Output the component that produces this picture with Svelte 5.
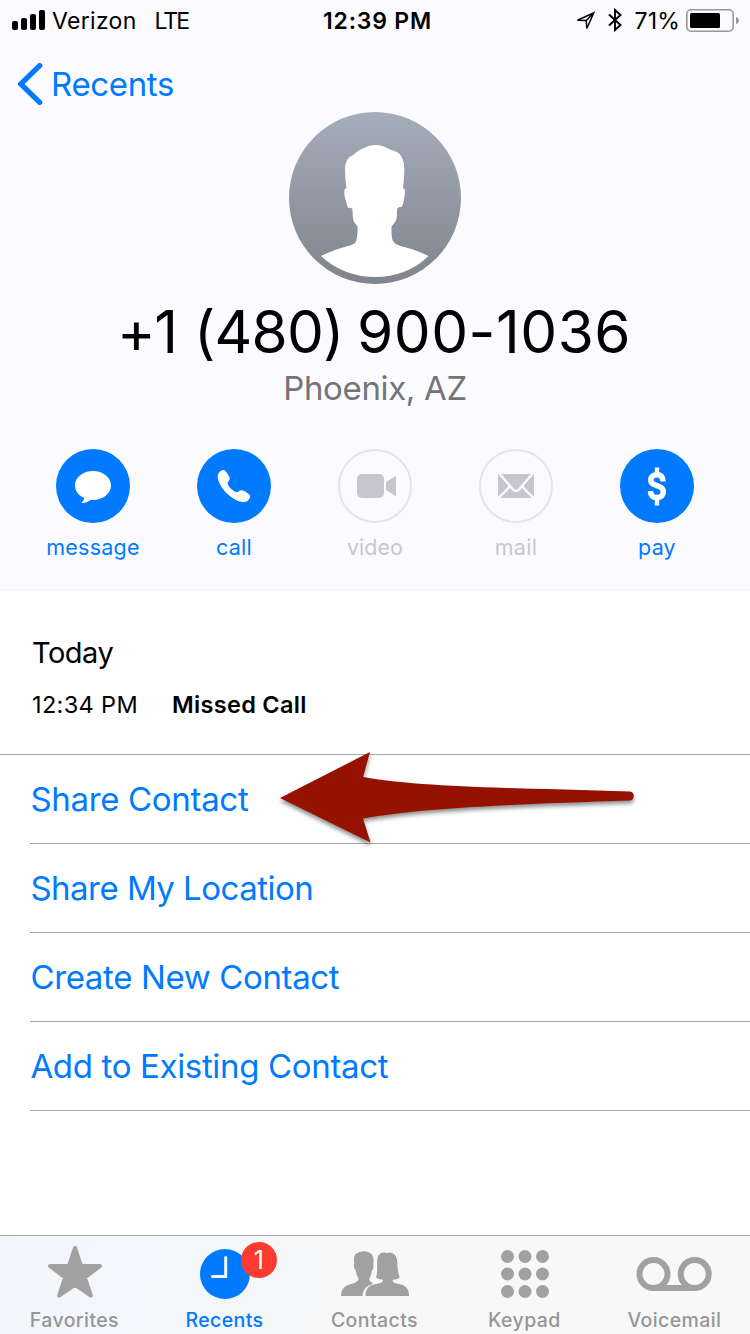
<script>
  const actions = [
    { id: 'message', on: true, ls: 0.25 },
    { id: 'call', on: true, ls: 0.3 },
    { id: 'video', on: false, ls: 0.05 },
    { id: 'mail', on: false, ls: 0.3 },
    { id: 'pay', on: true, ls: 0.2 }
  ];
  const links = [
    { text: 'Share Contact', ls: -0.32 },
    { text: 'Share My Location', ls: -0.52 },
    { text: 'Create New Contact', ls: -0.36 },
    { text: 'Add to Existing Contact', ls: -0.34 }
  ];
  const tabs = ['Favorites', 'Recents', 'Contacts', 'Keypad', 'Voicemail'];
  const dots = [0, 1, 2, 3, 4, 5, 6, 7, 8];
</script>

<main class="phone">
  <section class="header">
    <div class="status">
      <div class="left">
        <svg class="signal" width="34" height="21" viewBox="0 0 34 21">
          <rect x="0" y="11" width="6" height="9" rx="2" />
          <rect x="9" y="8" width="6" height="12" rx="2" />
          <rect x="18" y="4" width="6" height="16" rx="2" />
          <rect x="27" y="0" width="6" height="20" rx="2" />
        </svg>
        <span class="carrier">Verizon</span>
        <span class="network">LTE</span>
      </div>
      <div class="clock">12:39 PM</div>
      <div class="right">
        <svg class="locate" width="20" height="20" viewBox="0 0 20 20">
          <path d="M1.500 9.300 L17.800 1.800 L10.800 17.500 L10.200 9.600 Z M10.200 9.600 L17.800 1.800" fill="none" stroke="#000" stroke-width="1.500" stroke-linejoin="miter" />
        </svg>
        <svg class="bluetooth" width="14" height="24" viewBox="0 0 14 24">
          <path d="M1 6.500 L12.500 17 L7 22 V2 L12.500 7 L1 17.500" fill="none" stroke="#000" stroke-width="1.900" />
        </svg>
        <span class="percent">71%</span>
        <svg class="battery" width="54" height="24" viewBox="0 0 54 24">
          <rect x=".8" y=".8" width="46.400" height="21.400" rx="4.200" fill="none" stroke="#98989c" stroke-width="1.600" />
          <rect x="4" y="4" width="30" height="15" rx="1.500" />
          <path d="M50 8 Q53 9 53 11.500 T50 15 Z" fill="#98989c" />
        </svg>
      </div>
    </div>

    <div class="nav">
      <svg width="26" height="42" viewBox="0 0 26 42">
        <path d="M21.700 2.700 L2.700 21 L21.700 39.300" fill="none" stroke="#007aff" stroke-width="5.300" stroke-linecap="round" stroke-linejoin="miter" />
      </svg>
      <span>Recents</span>
    </div>

    <svg class="avatar" width="172" height="172" viewBox="0 0 172 172">
      <defs>
        <linearGradient id="shade" x1="0" y1="0" x2="0" y2="1">
          <stop offset="0" stop-color="#a5acba" />
          <stop offset="1" stop-color="#80848d" />
        </linearGradient>
      </defs>
      <circle cx="86" cy="86" r="86" fill="url(#shade)" />
      <path fill="#fff" d="M86 33 C92 33 96 35 100 37 C104 39 109 39 112 44 C116 50 115.500 58 115 66 L114 76 C117 77 116 81 115.500 85 C114.500 89 114 95 112 95 C110 95 108.500 95 108 98 C108 103 108 108 106 110 C104 113 102.500 114 102.500 115 C102.500 120 102.500 126 104 129 C106 133 112 134 119 136 C128 139 134 141 139.500 144 C125 158 107 165 86 165 C66 165 47 158 32 144 C38 141 45 138 52 136 C60 133.500 65 133 67 129.500 C68 125 69 120 68.500 114.500 C66 111 64.500 110 64 106 C63.500 101 64 96 62 96 C59 96 58.500 96 57.500 91 C55.500 85 55 81 55.500 78 C55.500 76.500 56.500 76.500 57.500 76.500 C56.500 69 56 62 56 55 C57 49 59 45 63.500 43.500 C67 40 70 38 75 36 C79 34 82 33 86 33 Z" />
    </svg>

    <h1><span class="country">+1</span> <span class="area">(480)</span> <span class="local">900-1036</span></h1>
    <p class="place">Phoenix, AZ</p>

    <div class="actions">
      {#each actions as a}
        <div class="action" class:off={!a.on}>
          <svg width="74" height="74" viewBox="0 0 74 74">
            {#if a.on}
              <circle cx="37" cy="37" r="37" fill="#007aff" />
            {:else}
              <circle cx="37" cy="37" r="36" fill="none" stroke="#e5e4ea" stroke-width="2" />
            {/if}
            {#if a.id === 'message'}
              <path fill="#fff" d="M37 22 C47 22 55 28.300 55 36.500 C55 44.500 47 51 37 51 L34.500 50.900 C32 53 29 54 26.300 54 C25.500 54 25.600 53.600 26.200 53 C27.600 51.600 28.500 50 28.300 49 C22.700 46.500 19 42 19 36.500 C19 28.300 27 22 37 22 Z" />
            {:else if a.id === 'call'}
              <path fill="#fff" d="M21.300 24.700 C22.500 22.500 25.500 20.500 27.500 21.300 C29 22 32 27 32.800 29 C33.200 31.500 30.600 32.300 30.600 34.500 C31.500 38 36 42 39.400 43.300 C41.500 43.500 42.500 40.700 45 41.200 C47.500 41.800 51.500 44.300 52.800 46 C54 48 52 51 50 52.300 C47.500 53.600 43.500 53.200 39 51 C31 47 23.500 38.500 21.600 32 C20.600 29 20.400 26.500 21.300 24.700 Z" />
            {:else if a.id === 'video'}
              <rect x="19" y="25" width="27" height="24" rx="5" fill="#c7c6cc" />
              <path fill="#c7c6cc" d="M58 27 V47.300 L48 41 V33 Z" />
            {:else if a.id === 'mail'}
              <rect x="19" y="25" width="36" height="24" fill="#c7c6cc" />
              <path d="M19.500 23.500 L33.500 40 Q37 43.800 40.500 40 L54.500 23.500 M18 50.500 L31.500 37 M56 50.500 L42.500 37" fill="none" stroke="#fbfaff" stroke-width="2.400" />
            {:else}
              <path d="M43.100 32.500 C42.900 28 40.600 25.700 37 25.700 C33.200 25.700 30.800 27.700 30.800 31 C30.800 38.500 43.300 34.800 43.300 42.800 C43.300 46.300 41 48.600 37 48.600 C32.800 48.600 30.600 46.200 30.500 42" fill="none" stroke="#fff" stroke-width="5.500" />
              <path d="M37 18.500 V25 M37 49 V56.500" stroke="#fff" stroke-width="4.400" />
            {/if}
          </svg>
          <span style="letter-spacing: {a.ls}px">{a.id}</span>
        </div>
      {/each}
    </div>
  </section>

  <section class="log">
    <h2>Today</h2>
    <div class="entry"><span class="when">12:34 PM</span><strong>Missed Call</strong></div>
  </section>

  <section class="links">
    {#each links as l}
      <div class="link"><span style="letter-spacing: {l.ls}px">{l.text}</span></div>
    {/each}
    <svg class="arrow" width="364" height="100" viewBox="0 0 364 100">
      <path d="M5 49 L95 3 L88 28 C150 39 250 39 355 42.500 C360 42.500 360 51.500 355 51.500 C250 55 150 58 88 69.500 L95.500 93.500 Z" fill="#961200" />
    </svg>
  </section>

  <nav class="tabs">
    {#each tabs as t}
      <div class="tab {t.toLowerCase()}">
        <svg width="80" height="64" viewBox="0 0 80 64">
          {#if t === 'Favorites'}
            <path d="M40 12 L46 30 L65 30 L50 41.500 L55.800 59.500 L40 48.500 L24.200 59.500 L30 41.500 L15 30 L34 30 Z" fill="#a1a1a1" stroke="#a1a1a1" stroke-width="4" stroke-linejoin="round" />
          {:else if t === 'Recents'}
            <circle cx="40" cy="38" r="25" fill="#007aff" />
            <path d="M40.700 21.500 V40.500 H27.500" fill="none" stroke="#f4f7fa" stroke-width="3" stroke-linecap="round" />
          {:else if t === 'Contacts'}
            <path fill="#a1a1a1" d="M6 60 C6 53 10 49.500 16 48 C21 46.500 23.500 45.500 23.500 42 C22 40 21.200 37 20.800 34.500 C18.500 32 18.500 29 19.200 27 C18.500 21 19.500 18 22 17.200 C25 14.500 32 14.500 35 17 C38.500 18.500 39 23 38.300 28 C39 31 38 34 36.800 35 C36.500 38 35.500 40.500 34.500 42 C34.500 44 34.500 45.500 36 46.300 C38.500 46.500 38 48 35 49 C30.500 51 28 54 27.500 60 Z" />
            <path fill="#a1a1a1" d="M30.500 60 C30.800 52 34 49.500 40 48.300 C45 47.300 48 46.500 48 43.700 C46 43.700 42.500 43 41 41.500 C43 36 41.500 28 42.500 22 C43.500 17.500 48 15.500 52 17.200 C57 15 62.500 19 62.300 27 C62.300 33 63.500 38 64.800 41.500 C63 43 60 43.700 57.500 43.700 C57.500 46.500 60 47.300 65 48.300 C71 49.500 74 53 74 60 Z" />
          {:else if t === 'Keypad'}
            {#each dots as d}
              <circle cx={22.500 + (d % 3) * 17.500} cy={20.500 + Math.floor(d / 3) * 17.500} r="6.500" fill="#a1a1a1" />
            {/each}
          {:else}
            <g fill="none" stroke="#a1a1a1" stroke-width="6"><circle cx="18.500" cy="38" r="14" /><circle cx="59.700" cy="38" r="14" /><path d="M18.500 52 H59.700" /></g>
          {/if}
        </svg>
        {#if t === 'Recents'}<b class="badge">1</b>{/if}
        <span>{t}</span>
      </div>
    {/each}
  </nav>
</main>

<style>
  :global(body) { margin: 0; background: #fff; }
  .phone { width: 750px; height: 1334px; display: flex; flex-direction: column; overflow: hidden; font-family: Inter, "Liberation Sans", sans-serif; color: #000; background: #fff; }
  svg { display: block; flex: none; }
  h1, h2, p { margin: 0; font-weight: 400; }
  span, h1, h2, strong { white-space: nowrap; }
  .header { box-sizing: border-box; height: 590px; flex: none; background: #fbfaff; border-bottom: 1px solid #f0f0f4; display: flex; flex-direction: column; align-items: center; }
  .status { width: 750px; height: 42px; flex: none; display: grid; grid-template-columns: 1fr auto 1fr; align-items: center; font-size: 23px; line-height: 42px; }
  .left { display: flex; align-items: center; padding-left: 12px; }
  .signal { margin-right: 6px; margin-top: -1px; }
  .carrier { letter-spacing: .3px; margin-right: 18px; }
  .network { letter-spacing: -2px; }
  .clock { font-weight: 600; letter-spacing: .8px; padding-left: 5px; }
  .right { display: flex; align-items: center; justify-content: flex-end; padding-right: 10px; }
  .locate { margin-right: 11.500px; }
  .bluetooth { margin-right: 12.500px; margin-top: -2px; }
  .percent { margin-right: 6px; letter-spacing: .2px; }
  .nav { width: 732px; height: 42px; margin-top: 21px; padding-left: 18px; display: flex; align-items: center; color: #007aff; font-size: 33px; line-height: 42px; flex: none; }
  .nav span { margin-left: 7px; letter-spacing: -.35px; }
  .avatar { margin-top: 7px; }
  h1 { box-sizing: border-box; width: 750px; padding-left: 117px; display: flex; font-size: 58.500px; line-height: 72px; height: 72px; margin-top: 12px; }
  .country { width: 77px; letter-spacing: -1.500px; }
  .area { width: 163px; letter-spacing: -.8px; }
  .local { letter-spacing: .5px; }
  .place { font-size: 33px; line-height: 40px; color: #747477; letter-spacing: -.35px; }
  .actions { width: 705px; margin-top: 41px; display: grid; grid-template-columns: repeat(5, 141px); }
  .action { display: flex; flex-direction: column; align-items: center; color: #007aff; font-size: 21.500px; line-height: 30px; gap: 9px; }
  .off { color: #c9c8ce; }
  .log { box-sizing: border-box; height: 165px; flex: none; padding: 43px 32px 0; border-bottom: 1px solid #a9a9ab; }
  h2 { font-size: 29px; line-height: 40px; letter-spacing: -.5px; }
  .entry { display: flex; font-size: 23.500px; line-height: 32px; margin-top: 16px; }
  .when { width: 140px; letter-spacing: .35px; }
  strong { font-weight: 600; letter-spacing: .32px; }
  .links { position: relative; flex: 1; }
  .link { box-sizing: border-box; height: 89px; margin-left: 30px; padding-left: .4px; border-bottom: 1px solid #a9a9ab; font-size: 33px; line-height: 89px; color: #007aff; }
  .arrow { position: absolute; left: 275px; top: -6.500px; filter: drop-shadow(0 3px 2px rgba(0, 0, 0, .45)); }
  .tabs { box-sizing: border-box; height: 99px; flex: none; border-top: 1px solid #a9a9ab; background: linear-gradient(100deg, #f2f6fb 0, #f4f7fa 30%, #f8f8f8 48%); display: grid; grid-template-columns: repeat(5, 1fr); }
  .tab { position: relative; display: flex; flex-direction: column; align-items: center; color: #969696; font-size: 19.500px; font-weight: 500; line-height: 26px; letter-spacing: .4px; }
  .tab svg { width: 80px; height: 64px; }
  .tab span { margin-top: 7px; margin-right: 1.200px; }
  .recents { color: #007aff; }
  .badge { position: absolute; left: 91px; top: 6px; width: 36px; height: 36px; border-radius: 50%; background: #ff3b30; color: #fff; font-size: 25px; font-weight: 400; line-height: 36px; text-align: center; }
</style>
